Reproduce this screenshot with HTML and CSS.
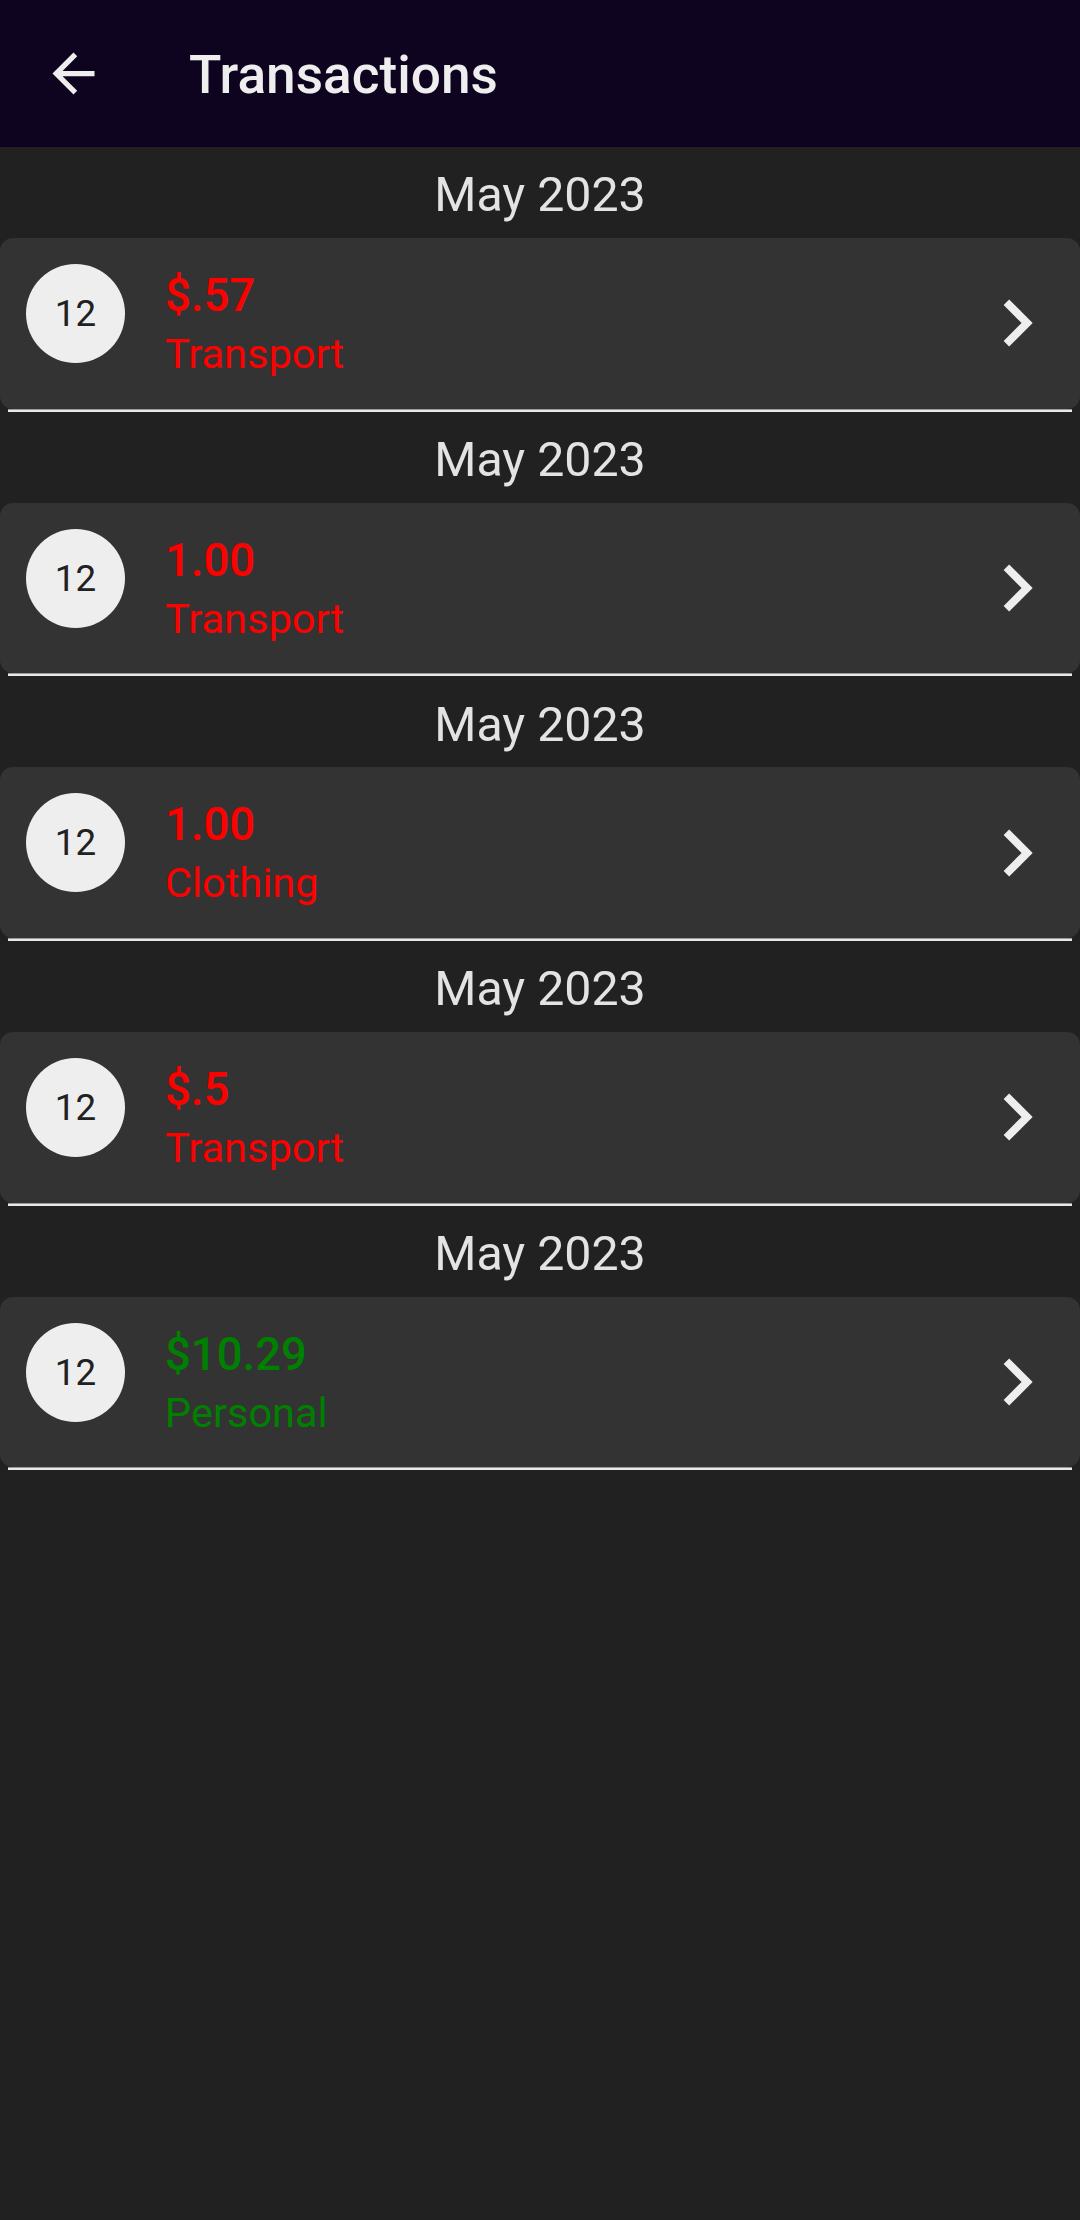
FILE: index.html
```html
<!DOCTYPE html>
<html>
<head>
<meta charset="utf-8">
<link rel="stylesheet" href="styles.css">
</head>
<body>
<header class="appbar">
  <div class="nav-btn">
    <svg class="nav-icon" viewBox="0 0 24 24"><path d="M20 11H7.83l5.59-5.59L12 4l-8 8 8 8 1.41-1.41L7.83 13H20v-2z"/></svg>
  </div>
  <h1 class="title">Transactions</h1>
</header>
<main class="list">
  <section class="group">
    <div class="month">May 2023</div>
    <div class="card">
      <div class="day">12</div>
      <div class="info">
        <div class="amount neg">$.57</div>
        <div class="category neg">Transport</div>
      </div>
      <svg class="chev" viewBox="0 0 24 24"><path d="M10 6L8.59 7.41 13.17 12l-4.58 4.59L10 18l6-6z"/></svg>
    </div>
    <div class="rule"></div>
  </section>
  <section class="group">
    <div class="month">May 2023</div>
    <div class="card">
      <div class="day">12</div>
      <div class="info">
        <div class="amount neg">1.00</div>
        <div class="category neg">Transport</div>
      </div>
      <svg class="chev" viewBox="0 0 24 24"><path d="M10 6L8.59 7.41 13.17 12l-4.58 4.59L10 18l6-6z"/></svg>
    </div>
    <div class="rule"></div>
  </section>
  <section class="group">
    <div class="month">May 2023</div>
    <div class="card">
      <div class="day">12</div>
      <div class="info">
        <div class="amount neg">1.00</div>
        <div class="category neg">Clothing</div>
      </div>
      <svg class="chev" viewBox="0 0 24 24"><path d="M10 6L8.59 7.41 13.17 12l-4.58 4.59L10 18l6-6z"/></svg>
    </div>
    <div class="rule"></div>
  </section>
  <section class="group">
    <div class="month">May 2023</div>
    <div class="card">
      <div class="day">12</div>
      <div class="info">
        <div class="amount neg">$.5</div>
        <div class="category neg">Transport</div>
      </div>
      <svg class="chev" viewBox="0 0 24 24"><path d="M10 6L8.59 7.41 13.17 12l-4.58 4.59L10 18l6-6z"/></svg>
    </div>
    <div class="rule"></div>
  </section>
  <section class="group">
    <div class="month">May 2023</div>
    <div class="card">
      <div class="day">12</div>
      <div class="info">
        <div class="amount pos">$10.29</div>
        <div class="category pos">Personal</div>
      </div>
      <svg class="chev" viewBox="0 0 24 24"><path d="M10 6L8.59 7.41 13.17 12l-4.58 4.59L10 18l6-6z"/></svg>
    </div>
    <div class="rule"></div>
  </section>
</main>
</body>
</html>
```
FILE: styles.css
```css
html, body {
  margin: 0;
  padding: 0;
}
body {
  background: #212121;
  width: 1080px;
  min-height: 2220px;
  font-family: Roboto, "Noto Sans", sans-serif;
  color: #eeeeee;
}
.appbar {
  height: 147px;
  background: #0e0420;
  display: flex;
  align-items: center;
}
.nav-btn {
  width: 147px;
  height: 147px;
  display: flex;
  align-items: center;
  justify-content: center;
}
.nav-icon {
  width: 63px;
  height: 63px;
  fill: #eeeeee;
}
.title {
  margin: 5px 0 0 42px;
  font-size: 53.2px;
  font-weight: 500;
  color: #eeeeee;
  line-height: 1;
}
.list {
  display: flex;
  flex-direction: column;
}
.group {
  display: flex;
  flex-direction: column;
}
.month {
  height: 91px;
  padding-top: 6px;
  box-sizing: border-box;
  display: flex;
  align-items: center;
  justify-content: center;
  font-size: 48.3px;
  color: #e3e3e3;
  line-height: 1;
}
.card {
  height: 170.7px;
  background: #333333;
  border-radius: 13px;
  display: flex;
  align-items: flex-start;
  padding: 0 16px 0 26px;
  box-sizing: border-box;
}
.day {
  width: 99px;
  height: 99px;
  margin-top: 26px;
  border-radius: 50%;
  background: #eeeeee;
  color: #212121;
  font-size: 36.75px;
  display: flex;
  align-items: center;
  justify-content: center;
  flex: none;
}
.info {
  margin-left: 40px;
  margin-top: 30px;
  flex: 1;
  display: flex;
  flex-direction: column;
}
.amount {
  font-size: 45.5px;
  font-weight: 500;
  line-height: 56px;
}
.category {
  font-size: 41.5px;
  line-height: 52px;
  margin-top: 4px;
}
.neg { color: #ff0000; }
.pos { color: #008000; }
.chev {
  width: 94px;
  height: 94px;
  fill: #eeeeee;
  align-self: center;
  flex: none;
}
.rule {
  height: 3px;
  margin: 0 8px 0 8px;
  background: #e8e8e8;
  border-top: 1px solid #9a9a9a;
  box-sizing: border-box;
}
```
